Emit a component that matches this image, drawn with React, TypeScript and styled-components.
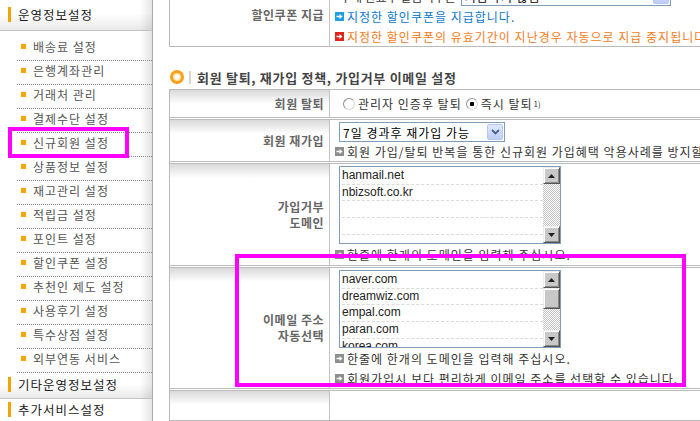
import React from 'react';
import styled, { createGlobalStyle } from 'styled-components';

const GlobalStyle = createGlobalStyle`
  html, body {
    margin: 0;
    padding: 0;
    background: #fff;
    overflow: hidden;
  }
  body {
    font-family: "Noto Sans CJK KR", "Noto Sans", sans-serif;
    font-size: 12px;
    letter-spacing: 1px;
    color: #333;
  }
`;

const menuItems = [
  '배송료 설정',
  '은행계좌관리',
  '거래처 관리',
  '결제수단 설정',
  '신규회원 설정',
  '상품정보 설정',
  '재고관리 설정',
  '적립금 설정',
  '포인트 설정',
  '할인쿠폰 설정',
  '추천인 제도 설정',
  '사용후기 설정',
  '특수상점 설정',
  '외부연동 서비스',
];

const blockedDomains = ['hanmail.net', 'nbizsoft.co.kr', '', '', ''];
const autoDomains = ['naver.com', 'dreamwiz.com', 'empal.com', 'paran.com', 'korea.com'];

type Tone = 'blue' | 'red' | 'gray';

const toneIcon: Record<Tone, string> = { blue: '#1e9fe0', red: '#e3231b', gray: '#8d8d8d' };
const toneText: Record<Tone, string> = { blue: '#0a78c8', red: '#f47b20', gray: '#333' };

const NoteIcon = ({ tone }: { tone: Tone }) => (
  <svg width="9" height="9" viewBox="0 0 9 9">
    <rect x="0" y="0" width="9" height="9" fill={toneIcon[tone]} />
    <path d="M1.5 3.8h3V2l3 2.5-3 2.5V5.2h-3z" fill="#fff" />
  </svg>
);

const ChevronDown = () => (
  <svg width="9" height="6" viewBox="0 0 9 6">
    <path d="M1 1l3.5 3.5L8 1" fill="none" stroke="#4b5f88" strokeWidth="1.8" />
  </svg>
);

const Tri = ({ down }: { down?: boolean }) => (
  <svg width="7" height="4" viewBox="0 0 7 4">
    <path d={down ? 'M0 0h7L3.5 4z' : 'M0 4h7L3.5 0z'} fill="#222" />
  </svg>
);

const Note = ({ tone = 'gray', h = 20, children }: { tone?: Tone; h?: number; children: React.ReactNode }) => (
  <NoteRow $tone={tone} $h={h}>
    <NoteIcon tone={tone} />
    <span>{children}</span>
  </NoteRow>
);

const ListBox = ({ items, thumb }: { items: string[]; thumb?: boolean }) => (
  <ListFrame>
    <ListLines>
      {items.map((d, i) => (
        <ListLine key={i}>{d}</ListLine>
      ))}
    </ListLines>
    <ScrollBar>
      <ScrollButton>
        <Tri />
      </ScrollButton>
      {thumb && <ScrollThumb />}
      <ScrollTrack />
      <ScrollButton>
        <Tri down />
      </ScrollButton>
    </ScrollBar>
  </ListFrame>
);

export default function App() {
  return (
    <Page>
      <GlobalStyle />
      <Sidebar>
        <MenuHead>운영정보설정</MenuHead>
        <MenuList>
          {menuItems.map((m) => (
            <MenuItem key={m}>{m}</MenuItem>
          ))}
        </MenuList>
        <MenuHead $h={26}>기타운영정보설정</MenuHead>
        <MenuHead $h={26} $plain>
          추가서비스설정
        </MenuHead>
      </Sidebar>

      <Main>
        <FormBox>
          <Row>
            <Label>할인쿠폰 지급</Label>
            <Value $h={62}>
              <Line>
                구매 완료후 발급여부는
                <SelectBox $w={210} style={{ marginLeft: 5 }}>
                  지급하지 않음
                  <SelectArrow>
                    <ChevronDown />
                  </SelectArrow>
                </SelectBox>
              </Line>
              <Note tone="blue">지정한 할인쿠폰을 지급합니다.</Note>
              <Note tone="red">지정한 할인쿠폰의 유효기간이 지난경우 자동으로 지급 중지됩니다.</Note>
            </Value>
          </Row>
        </FormBox>

        <SectionTitle>
          <TitleRing />
          <TitleBar />
          회원 탈퇴, 재가입 정책, 가입거부 이메일 설정
        </SectionTitle>

        <FormBox>
          <Row>
            <Label>회원 탈퇴</Label>
            <Value $h={27} $center>
              <RadioLabel>
                <Radio />
                관리자 인증후 탈퇴
              </RadioLabel>
              <RadioLabel>
                <Radio $checked />
                즉시 탈퇴<Sup>1)</Sup>
              </RadioLabel>
            </Value>
          </Row>
          <Row>
            <Label>회원 재가입</Label>
            <Value $h={41}>
              <SelectBox $w={166} style={{ marginLeft: 4 }}>
                7일 경과후 재가입 가능
                <SelectArrow>
                  <ChevronDown />
                </SelectArrow>
              </SelectBox>
              <Note h={19}>회원 가입/탈퇴 반복을 통한 신규회원 가입혜택 악용사례를 방지할 수 있습니다.</Note>
            </Value>
          </Row>
          <Row>
            <Label>
              가입거부
              <br />
              도메인
            </Label>
            <Value $h={101}>
              <ListBox items={blockedDomains} />
              <Note>한줄에 한개의 도메인을 입력해 주십시오.</Note>
            </Value>
          </Row>
          <Row>
            <Label>
              이메일 주소
              <br />
              자동선택
            </Label>
            <Value $h={120}>
              <ListBox items={autoDomains} thumb />
              <Note>한줄에 한개의 도메인을 입력해 주십시오.</Note>
              <Note>회원가입시 보다 편리하게 이메일 주소를 선택할 수 있습니다.</Note>
            </Value>
          </Row>
          <Row $double>
            <Label />
            <Value $h={29} />
          </Row>
        </FormBox>
      </Main>

      <Highlight style={{ left: 8, top: 127, width: 121, height: 31 }} />
      <Highlight style={{ left: 235, top: 254, width: 451, height: 133 }} />
    </Page>
  );
}

const Page = styled.div`
  position: relative;
  display: flex;
  width: 700px;
  height: 421px;
  overflow: hidden;
`;

const Sidebar = styled.div`
  flex: 0 0 152px;
  border-right: 1px solid #a9a9a9;
  background: linear-gradient(to right, #fff 140px, #e2e2e2 152px);
`;

const MenuHead = styled.div<{ $h?: number; $plain?: boolean }>`
  box-sizing: border-box;
  height: ${(p) => p.$h ?? 31}px;
  display: flex;
  align-items: center;
  padding: 0 0 ${(p) => (p.$plain ? 4 : 2)}px 8px;
  border-bottom: 1px solid #c2c2c2;
  background: linear-gradient(to right, rgba(255, 255, 255, 0) 140px, rgba(0, 0, 0, 0.1) 152px),
    ${(p) => (p.$plain ? '#fff' : 'linear-gradient(#fff 45%, #e9e9e9)')};
  font-size: 12.5px;
  color: #222;
  white-space: nowrap;

  &::before {
    content: '';
    width: 3px;
    height: 15px;
    background: #f6a300;
    margin-right: 7px;
  }
`;

const MenuList = styled.div`
  padding: 6px 0 0 17px;
`;

const MenuItem = styled.div`
  box-sizing: border-box;
  height: 24px;
  display: flex;
  align-items: center;
  padding-bottom: 5px;
  border-bottom: 1px dotted #8a8a8a;
  color: #555;
  white-space: nowrap;

  &::before {
    content: '';
    width: 5px;
    height: 5px;
    background: #f7a600;
    margin: 0 7px 0 4px;
  }
`;

const Main = styled.div`
  flex: 1;
  min-width: 0;
  padding-left: 16px;
  margin-top: -17px;
`;

const FormBox = styled.div`
  width: 560px;
  border: 1px solid #b9b9b9;
  border-right: none;
`;

const Row = styled.div<{ $double?: boolean }>`
  display: flex;
  & + & {
    border-top: ${(p) => (p.$double ? '3px double #bcbcbc' : '1px solid #c2c2c2')};
  }
`;

const Label = styled.div`
  flex: 0 0 154px;
  display: flex;
  align-items: center;
  justify-content: flex-end;
  padding-right: 5px;
  border-right: 1px solid #c2c2c2;
  background: linear-gradient(#d9d9d9, #ececec 7px, #fff 14px);
  font-weight: bold;
  color: #666;
  letter-spacing: 0.5px;
  text-align: right;
  line-height: 16px;
  white-space: nowrap;
`;

const Value = styled.div<{ $h: number; $center?: boolean }>`
  flex: 1;
  box-sizing: border-box;
  height: ${(p) => p.$h}px;
  padding: ${(p) => (p.$center ? '0 0 0 5px' : '2px 0 0 5px')};
  display: flex;
  flex-direction: ${(p) => (p.$center ? 'row' : 'column')};
  align-items: ${(p) => (p.$center ? 'center' : 'flex-start')};
  overflow: hidden;
`;

const Line = styled.div`
  display: flex;
  align-items: center;
  height: 20px;
  padding-left: 5px;
  letter-spacing: 0;
  white-space: nowrap;
  color: #333;
`;

const NoteRow = styled.div<{ $tone: Tone; $h: number }>`
  display: flex;
  align-items: center;
  gap: 3px;
  height: ${(p) => p.$h}px;
  white-space: nowrap;
  color: ${(p) => toneText[p.$tone]};

  svg {
    flex: 0 0 auto;
  }
`;

const SelectBox = styled.div<{ $w: number }>`
  flex: 0 0 auto;
  box-sizing: border-box;
  display: inline-flex;
  align-items: center;
  width: ${(p) => p.$w}px;
  height: 20px;
  padding-left: 3px;
  border: 1px solid #7f9db9;
  background: #fff;
  color: #000;
  font-size: 12px;
  letter-spacing: 1px;
  white-space: nowrap;
`;

const SelectArrow = styled.span`
  box-sizing: border-box;
  margin-left: auto;
  margin-right: 1px;
  width: 16px;
  height: 16px;
  display: flex;
  align-items: center;
  justify-content: center;
  border: 1px solid #b7c9f3;
  border-radius: 2px;
  background: linear-gradient(#dfe8fe, #bccdf8);
`;

const RadioLabel = styled.label`
  display: inline-flex;
  align-items: center;
  margin-left: 8px;
  color: #333;
  white-space: nowrap;

  & + & {
    margin-left: 4px;
  }
`;

const Radio = styled.span<{ $checked?: boolean }>`
  box-sizing: border-box;
  width: 12px;
  height: 12px;
  margin-right: 3px;
  border-radius: 50%;
  border: 1px solid #8f8f8f;
  border-right-color: #d8d8d8;
  border-bottom-color: #d8d8d8;
  background: ${(p) =>
    p.$checked ? 'radial-gradient(circle, #000 0 2px, #fff 2.5px)' : '#fff'};
`;

const Sup = styled.sup`
  font-size: 8px;
  line-height: 0;
  margin-left: 1px;
  letter-spacing: 0;
`;

const SectionTitle = styled.div`
  display: flex;
  align-items: center;
  height: 20px;
  margin: 20px 0 2px;
  font-size: 13px;
  font-weight: bold;
  letter-spacing: 0.7px;
  color: #444;
  white-space: nowrap;
`;

const TitleRing = styled.span`
  box-sizing: border-box;
  width: 14px;
  height: 14px;
  margin-left: 1px;
  border-radius: 50%;
  border: 3px solid #f7a11a;
  background: radial-gradient(circle, #fff 0 2px, #fde2ac 3px);
`;

const TitleBar = styled.span`
  width: 2px;
  height: 13px;
  margin: 0 6px 0 5px;
  background: #d4d4d4;
`;

const ListFrame = styled.div`
  box-sizing: border-box;
  display: flex;
  width: 222px;
  height: 78px;
  margin-left: 4px;
  flex: 0 0 auto;
  border: 1px solid #7f9db9;
  background: #fff;
  overflow: hidden;
`;

const ListLines = styled.div`
  flex: 1;
  padding: 1px 0 0 2px;
  overflow: hidden;
`;

const ListLine = styled.div`
  box-sizing: border-box;
  height: 16.7px;
  border-bottom: 1px dashed #dadada;
  font-family: "Liberation Sans", Arial, sans-serif;
  font-size: 12px;
  letter-spacing: 0;
  line-height: 15px;
  color: #222;
  white-space: nowrap;
`;

const ScrollBar = styled.div`
  flex: 0 0 17px;
  display: flex;
  flex-direction: column;
`;

const ScrollButton = styled.div`
  box-sizing: border-box;
  flex: 0 0 17px;
  display: flex;
  align-items: center;
  justify-content: center;
  border: 1px solid #555;
  border-top-color: #eee;
  border-left-color: #eee;
  box-shadow: inset 1px 1px 0 #fff, inset -1px -1px 0 #888;
  background: #c8c8c8;
`;

const ScrollThumb = styled(ScrollButton)`
  flex: 0 0 21px;
`;

const ScrollTrack = styled.div`
  flex: 1;
  background-color: #fff;
  background-image: repeating-conic-gradient(#c6c6c6 0 25%, #fff 0 50%);
  background-size: 2px 2px;
`;

const Highlight = styled.div`
  position: absolute;
  box-sizing: border-box;
  border: 4px solid #ff00ff;
  pointer-events: none;
`;
